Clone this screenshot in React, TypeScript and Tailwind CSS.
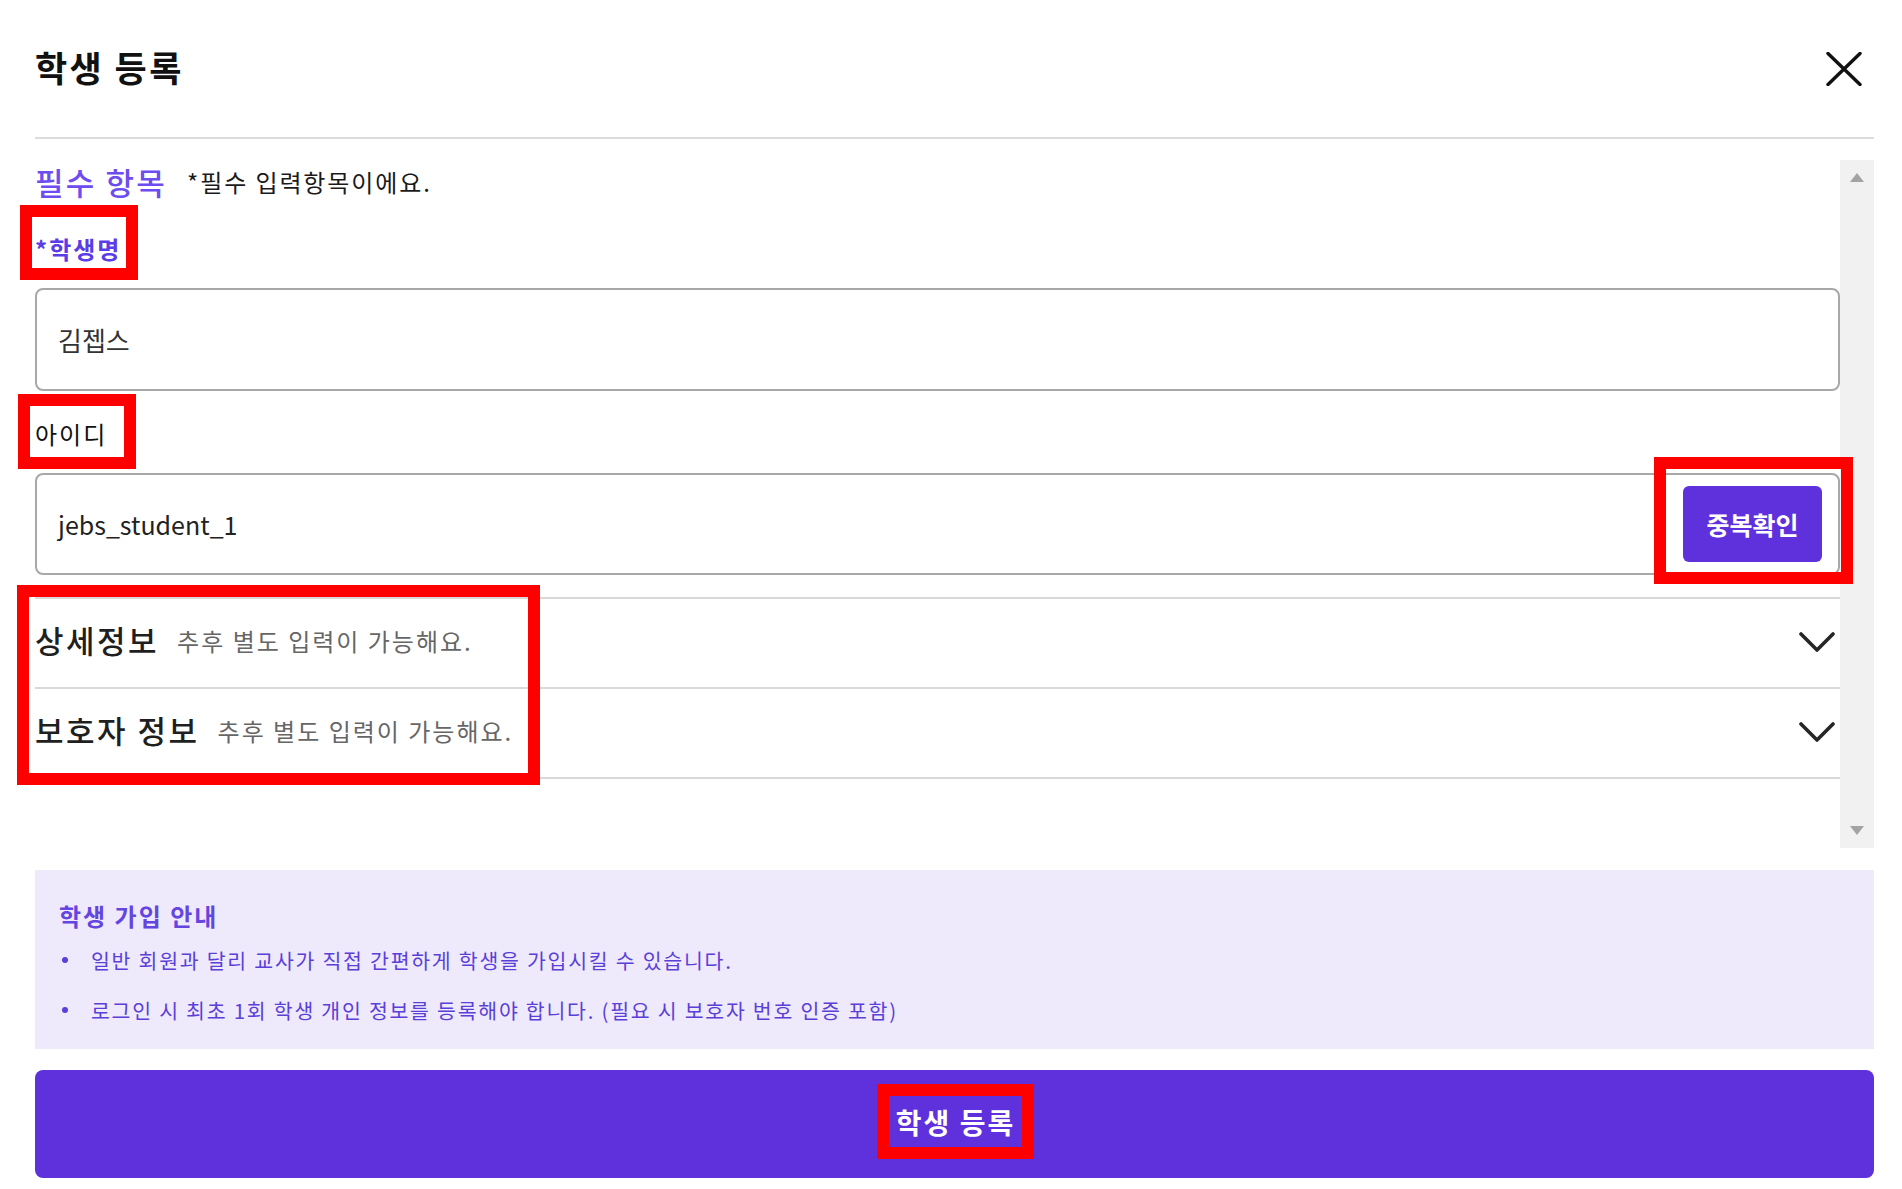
import React from "react"

const FONT = "font-['Noto_Sans_CJK_KR','Noto_Sans',sans-serif]"

function RedBox({ className }: { className: string }) {
  return <div className={`pointer-events-none absolute border-[12px] border-[#ff0000] ${className}`} />
}

function Chevron() {
  return (
    <svg width="36" height="22" viewBox="0 0 36 22" fill="none">
      <path d="M2 3 L18 19 L34 3" stroke="#262626" strokeWidth="3.6" strokeLinecap="round" strokeLinejoin="round" />
    </svg>
  )
}

const ROWS = [
  { title: "상세정보", note: "추후 별도 입력이 가능해요." },
  { title: "보호자 정보", note: "추후 별도 입력이 가능해요." },
]

export default function App() {
  return (
    <div className={`${FONT} w-full h-[1189px] bg-white pl-[35px] pr-[28px] flex flex-col`}>
      {/* Header */}
      <div className="h-[137px] flex items-center justify-between">
        <h1 className="mt-[-4px] text-[35px] leading-none font-bold text-[#111] tracking-[2.4px]">학생 등록</h1>
        <button className="mr-[12px]">
          <svg width="36" height="34" viewBox="0 0 36 34" fill="none">
            <path d="M2 1.5 L34 32.5 M34 1.5 L2 32.5" stroke="#111" strokeWidth="3.4" strokeLinecap="round" />
          </svg>
        </button>
      </div>
      <div className="h-[2px] bg-[#dcdcdc]" />

      {/* Scroll area */}
      <div className="mt-[21px] h-[688px] flex">
        <div className="flex-1 flex flex-col">
          <div className="h-[46px] flex items-center gap-[20px] mt-[-2px]">
            <span className="text-[31px] leading-none text-[#6d4cf0] font-medium tracking-[2.2px]">필수 항목</span>
            <span className="text-[24px] leading-none text-[#1a1a1a] mt-[2px] tracking-[1.9px]">*필수 입력항목이에요.</span>
          </div>

          <div className="relative h-[82px] flex items-center pt-[4px] mt-[2px]">
            <RedBox className="left-[-15px] top-[-1px] w-[118px] h-[75px]" />
            <span className="text-[24px] leading-none font-semibold text-[#5a3de6] tracking-[2px]">*학생명</span>
          </div>
          <div className="h-[103px] border-2 border-[#a8a8a8] rounded-[8px] flex items-center pl-[21px]">
            <span className="text-[26px] leading-none text-[#333]">김젭스</span>
          </div>

          <div className="relative h-[82px] flex items-center pt-[4px]">
            <RedBox className="left-[-17px] top-[3px] w-[118px] h-[75px]" />
            <span className="text-[24px] leading-none text-[#111] tracking-[2px]">아이디</span>
          </div>
          <div className="h-[102px] border-2 border-[#a8a8a8] rounded-[8px] flex items-center justify-between pl-[21px] pr-[16px]">
            <span className="text-[25px] leading-none text-[#222]">jebs_student_1</span>
            <div className="relative">
              <RedBox className="left-[-29px] top-[-29px] w-[199px] h-[127px]" />
              <button className="w-[139px] h-[76px] rounded-[6px] bg-[#5f31dc] text-white text-[25px] font-bold leading-none">
                중복확인
              </button>
            </div>
          </div>

          {/* Accordion */}
          <div className="relative mt-[22px]">
            <RedBox className="left-[-18px] top-[-12px] w-[523px] h-[200px]" />
            {ROWS.map((r, i) => (
              <div
                key={r.title}
                className={`h-[90px] border-t-2 border-[#d9d9d9] flex items-center justify-between ${i === ROWS.length - 1 ? "border-b-2 h-[92px]" : ""}`}
              >
                <div className="flex items-center gap-[18px] mt-[-7px]">
                  <span className="text-[31px] leading-none font-medium text-[#1f1f1f] tracking-[2.5px]">{r.title}</span>
                  <span className="text-[24px] leading-none text-[#666] mt-[2px] tracking-[2px]">{r.note}</span>
                </div>
                <div className="mr-[5px] mt-[-2px]">
                  <Chevron />
                </div>
              </div>
            ))}
          </div>
        </div>

        {/* Scrollbar */}
        <div className="w-[34px] bg-[#f1f1f1] flex flex-col items-center justify-between pt-[13px] pb-[13px]">
          <svg width="14" height="9" viewBox="0 0 14 9">
            <path d="M7 0 L14 9 L0 9 Z" fill="#a3a3a3" />
          </svg>
          <svg width="14" height="9" viewBox="0 0 14 9">
            <path d="M0 0 L14 0 L7 9 Z" fill="#a3a3a3" />
          </svg>
        </div>
      </div>

      {/* Info box */}
      <div className="mt-[22px] h-[179px] bg-[#eeeafb] pl-[24px] pt-[28px]">
        <p className="text-[24px] leading-[36px] font-semibold text-[#6445e0] tracking-[2px]">학생 가입 안내</p>
        <ul className="mt-[7px] flex flex-col gap-[12px]">
          {[
            "일반 회원과 달리 교사가 직접 간편하게 학생을 가입시킬 수 있습니다.",
            "로그인 시 최초 1회 학생 개인 정보를 등록해야 합니다. (필요 시 보호자 번호 인증 포함)",
          ].map((t) => (
            <li key={t} className="h-[38px] flex items-center">
              <span className="ml-[3px] w-[6px] h-[6px] rounded-full bg-[#5b3fd9]" />
              <span className="ml-[23px] text-[20.5px] leading-none text-[#5b3fd9] tracking-[1.75px]">{t}</span>
            </li>
          ))}
        </ul>
      </div>

      {/* Submit */}
      <button className="relative mt-[21px] h-[108px] rounded-[8px] bg-[#5f31dc] flex items-center justify-center">
        <RedBox className="left-[842px] top-[14px] w-[157px] h-[75px]" />
        <span className="text-[28px] leading-none font-bold text-white tracking-[2px] mr-[-2px] mt-[-5px]">학생 등록</span>
      </button>
    </div>
  )
}
